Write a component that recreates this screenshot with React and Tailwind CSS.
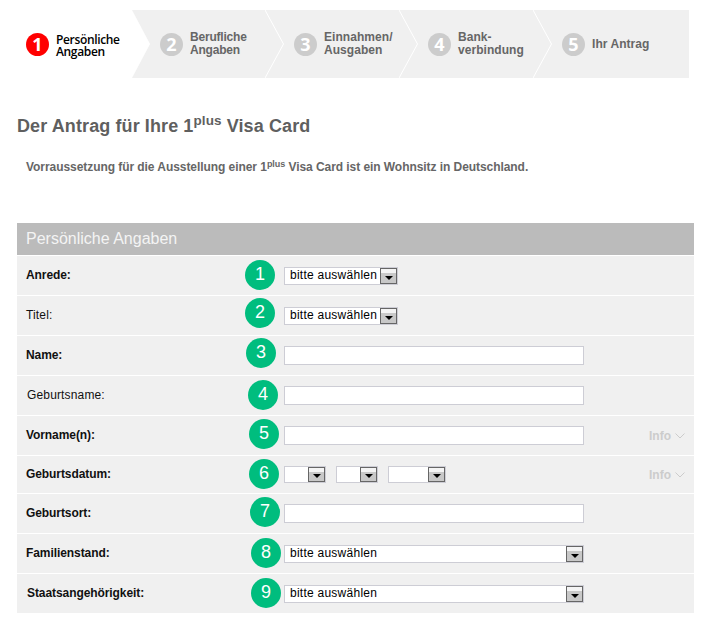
const steps = [
  { num: "2", lines: ["Berufliche", "Angaben"], width: "w-[133px]", pad: "pl-[28px]", tracking: "tracking-[-0.2px]" },
  { num: "3", lines: ["Einnahmen/", "Ausgaben"], width: "w-[134px]", pad: "pl-[29px]", tracking: "tracking-[0.05px]" },
  { num: "4", lines: ["Bank-", "verbindung"], width: "w-[134px]", pad: "pl-[29px]", tracking: "tracking-[0.05px]" },
  { num: "5", lines: ["Ihr Antrag"], width: "flex-1", pad: "pl-[29px]", tracking: "tracking-[0.05px]" },
];

const rows = [
  { label: "Anrede:", bold: true, num: "1", field: "short", height: "h-[39px]", left: "left-[228px]", top: "top-[4px]" },
  { label: "Titel:", num: "2", field: "short", height: "h-[39px]", left: "left-[228px]", top: "top-[2px]" },
  { label: "Name:", bold: true, num: "3", field: "input", height: "h-[39px]", left: "left-[229px]", top: "top-[2px]" },
  { label: "Geburtsname:", num: "4", field: "input", height: "h-[39px]", left: "left-[231px]", top: "top-[4px]", indent: "pl-[10px]" },
  { label: "Vorname(n):", bold: true, num: "5", field: "input", height: "h-[39px]", left: "left-[232px]", top: "top-[3px]", info: true },
  { label: "Geburtsdatum:", bold: true, num: "6", field: "date", height: "h-[37px]", left: "left-[232px]", top: "top-[3px]", info: true },
  { label: "Geburtsort:", bold: true, num: "7", field: "input", height: "h-[39px]", left: "left-[233px]", top: "top-[3px]" },
  { label: "Familienstand:", bold: true, num: "8", field: "long", height: "h-[39px]", left: "left-[234px]", top: "top-[4px]" },
  { label: "Staatsangehörigkeit:", bold: true, num: "9", field: "long", height: "h-[39px]", left: "left-[234px]", top: "top-[4px]", indent: "pl-[10px]" },
];

function SelectBox({ width, height = "h-[18px]", text }) {
  return (
    <div className={`${width} ${height} flex items-stretch border border-[#cdcdd5] bg-white`}>
      <span className="flex-1 pl-[5px] text-[12px] leading-[14px] tracking-[0.25px] text-black whitespace-nowrap overflow-hidden">{text}</span>
      <span className="w-[17px] flex items-end justify-center border border-[#666666] bg-[linear-gradient(#f4f4f4_0%,#f4f4f4_30%,#c8c8c8_30%,#c8c8c8_100%)] pb-[3px]">
        <span className="w-0 h-0 border-x-[4px] border-x-transparent border-t-[4px] border-t-black" />
      </span>
    </div>
  );
}

function Field({ type }) {
  if (type === "short") return <SelectBox width="w-[114px]" text="bitte auswählen" />;
  if (type === "long") return <SelectBox width="w-[300px]" text="bitte auswählen" />;
  if (type === "date") {
    return (
      <div className="flex gap-[10px]">
        <SelectBox width="w-[42px]" height="h-[17px]" />
        <SelectBox width="w-[42px]" height="h-[17px]" />
        <SelectBox width="w-[58px]" height="h-[17px]" />
      </div>
    );
  }
  return <input type="text" className="w-[300px] h-[19px] border border-[#cdcdd5] bg-white" />;
}

function InfoLink() {
  return (
    <span className="ml-auto mr-[9px] flex items-center gap-[4px] text-[12px] font-bold text-[#cccccc]">
      Info
      <svg width="10" height="6" viewBox="0 0 10 6" fill="none" stroke="#cccccc" strokeWidth="1">
        <path d="M0.5 0.5 L5 5 L9.5 0.5" />
      </svg>
    </span>
  );
}

export default function App() {
  return (
    <div className="w-[711px] h-[621px] bg-white overflow-hidden font-['Liberation_Sans',Arial,sans-serif]">
      <div className="pt-[10px] w-[689px] flex">
        <div className="w-[132px] h-[68px] flex items-center pl-[26px] bg-white">
          <span className="w-[23px] h-[23px] rounded-full bg-[#ff0000] text-white flex items-center justify-center text-[18px] font-bold font-['Open_Sans',sans-serif]">1</span>
          <span className="ml-[7px] pt-[3px] text-[12px] leading-[12px] font-semibold text-black font-['Open_Sans',sans-serif] tracking-[-0.35px]">
            Persönliche<br />Angaben
          </span>
        </div>
        {steps.map((step, i) => (
          <div key={step.num} className={`${step.width} ${step.pad} relative h-[68px] flex items-center bg-[#f0f0f0]`}>
            <svg className="absolute left-0 top-0" width="20" height="68" viewBox="0 0 20 68">
              {i === 0 ? (
                <path d="M0 0 L18 34 L0 68 Z" fill="#ffffff" />
              ) : (
                <path d="M0 0 L18.5 34 L0 68" fill="none" stroke="#ffffff" strokeWidth="1" />
              )}
            </svg>
            <span className="w-[23px] h-[23px] rounded-full bg-[#cccccc] text-white flex items-center justify-center text-[18px] font-bold font-['Open_Sans',sans-serif]">{step.num}</span>
            <span className={`ml-[7px] text-[12px] leading-[13px] font-bold ${step.tracking} text-[#666666]`}>
              {step.lines.map((line) => (
                <span key={line} className="block">{line}</span>
              ))}
            </span>
          </div>
        ))}
      </div>

      <h1 className="mt-[36px] ml-[17px] text-[18px] leading-[24px] font-bold tracking-[0.1px] text-[#5f5f5f]">
        Der Antrag für Ihre 1<sup>plus</sup> Visa Card
      </h1>
      <p className="mt-[21px] ml-[26px] text-[12px] leading-[16px] font-bold tracking-[-0.06px] text-[#666666]">
        Vorraussetzung für die Ausstellung einer 1<sup>plus</sup> Visa Card ist ein Wohnsitz in Deutschland.
      </p>

      <div className="mt-[48px] ml-[17px] w-[677px] flex flex-col gap-px">
        <div className="h-[32px] bg-[#bbbbbb] pl-[9px] text-[16px] leading-[31px] text-[#f4f4f4]">Persönliche Angaben</div>
        {rows.map((row) => (
          <div key={row.num} className={`${row.height} relative flex items-center bg-[#f0f0f0] ${row.indent || "pl-[9px]"}`}>
            <span className={`${row.indent ? "w-[257px]" : "w-[258px]"} text-[12px] -mt-[2px] ${row.bold ? "font-bold tracking-[-0.08px]" : "tracking-[0.15px]"} text-[#111111]`}>{row.label}</span>
            <span className={`${row.left} ${row.top} absolute w-[30px] h-[30px] rounded-full bg-[#00bd7e] text-white text-[18px] pb-[2px] flex items-center justify-center`}>{row.num}</span>
            <Field type={row.field} />
            {row.info && <InfoLink />}
          </div>
        ))}
      </div>
    </div>
  );
}
